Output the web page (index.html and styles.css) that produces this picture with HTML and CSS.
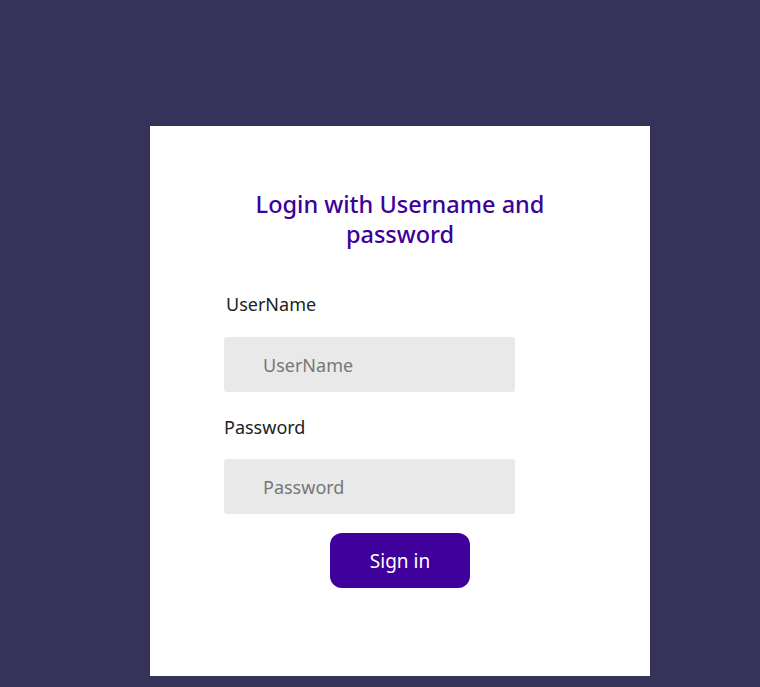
FILE: index.html
```html
<!DOCTYPE html>
<html>
<head>
<meta charset="utf-8">
<link rel="stylesheet" href="styles.css">
</head>
<body>
<main class="card">
  <h1 class="title">Login with Username and password</h1>
  <form class="form">
    <label class="label label-user" for="u">UserName</label>
    <input class="field" id="u" type="text" placeholder="UserName">
    <label class="label label-pass" for="p">Password</label>
    <input class="field field-pass" id="p" type="password" placeholder="Password">
    <div class="actions">
      <button class="btn" type="button">Sign in</button>
    </div>
  </form>
</main>
</body>
</html>
```
FILE: styles.css
```css
html, body {
  margin: 0;
  padding: 0;
}
body {
  background: #35335a;
  font-family: "Noto Sans", "Open Sans", sans-serif;
  min-height: 687px;
  padding-top: 126px;
  box-sizing: border-box;
}
.card {
  margin-left: 150px;
  width: 500px;
  height: 550px;
  background: #ffffff;
  box-sizing: border-box;
  padding-top: 63px;
}
.title {
  margin: 0 auto;
  width: 310px;
  text-align: center;
  font-size: 23.5px;
  line-height: 30px;
  font-weight: 500;
  color: #3d0099;
}
.form {
  margin-top: 43px;
  margin-left: 74px;
  width: 291px;
  display: flex;
  flex-direction: column;
}
.label {
  font-size: 18px;
  line-height: 24px;
  color: #222222;
}
.label-user {
  padding-left: 2px;
}
.field {
  margin-top: 21px;
  height: 55px;
  border: none;
  border-radius: 3px;
  background: #e9e9e9;
  padding: 0 0 0 39px;
  box-sizing: border-box;
  font-family: inherit;
  font-size: 18px;
  color: #333;
  outline: none;
}
.field::placeholder {
  color: #777777;
}
.label-pass {
  margin-top: 23px;
}
.field-pass {
  margin-top: 20px;
}
.actions {
  margin-top: 19px;
  display: flex;
  justify-content: center;
  width: 352px;
}
.btn {
  width: 140px;
  height: 55px;
  border: none;
  border-radius: 12px;
  background: #3f009c;
  color: #ffffff;
  font-family: inherit;
  font-size: 19px;
}
```
